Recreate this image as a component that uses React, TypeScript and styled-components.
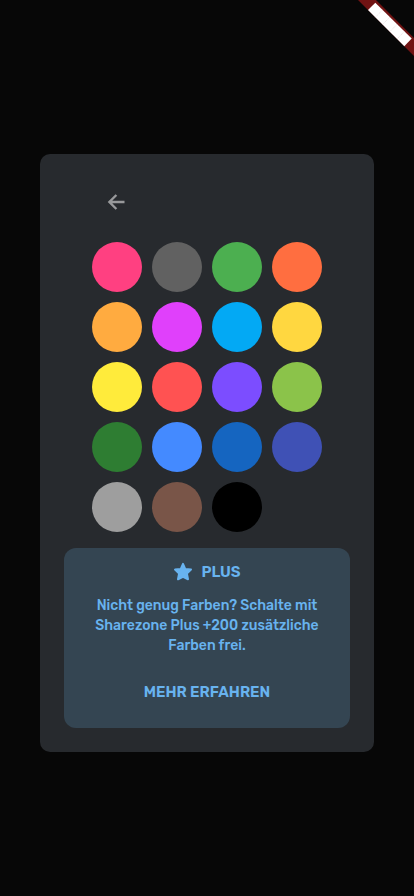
import React from "react";
import styled, { createGlobalStyle } from "styled-components";

const GlobalStyle = createGlobalStyle`
  *, *::before, *::after { box-sizing: border-box; }
  body {
    margin: 0;
    background: #070707;
    font-family: Rubik, Roboto, sans-serif;
  }
`;

const Backdrop = styled.main`
  position: relative;
  display: flex;
  align-items: center;
  justify-content: center;
  min-height: 100vh;
  padding: 34px 40px 24px;
  overflow: hidden;
`;

const Ribbon = styled.svg`
  position: absolute;
  top: 0;
  right: 0;
  width: 56px;
  height: 56px;
`;

const Dialog = styled.section`
  width: 100%;
  max-width: 400px;
  padding: 24px;
  border-radius: 10px;
  background: #272a2e;
`;

const Picker = styled.div`
  width: 230px;
  margin: 0 auto 16px;
`;

const BackButton = styled.button`
  display: grid;
  place-items: center;
  width: 48px;
  height: 48px;
  margin-bottom: 16px;
  padding: 0;
  border: 0;
  border-radius: 50%;
  background: none;
  color: #98999b;
  cursor: pointer;
`;

const Swatches = styled.div`
  display: grid;
  grid-template-columns: repeat(4, 50px);
  gap: 10px;
`;

const Swatch = styled.button<{ $color: string }>`
  width: 50px;
  height: 50px;
  padding: 0;
  border: 0;
  border-radius: 50%;
  background: ${({ $color }) => $color};
  cursor: pointer;
`;

const PlusCard = styled.aside`
  display: flex;
  flex-direction: column;
  align-items: center;
  padding: 12px;
  border-radius: 12px;
  background: #344552;
  color: #68b3ef;
  text-align: center;
`;

const PlusTitle = styled.h2`
  display: flex;
  align-items: center;
  gap: 8px;
  margin: 0 0 12px;
  font-size: 15px;
  line-height: 24px;
  font-weight: 600;
`;

const PlusText = styled.p`
  max-width: 240px;
  margin: 0;
  font-size: 14px;
  line-height: 20px;
  font-weight: 500;
`;

const MoreButton = styled.button`
  height: 48px;
  margin-top: 12px;
  padding: 0 12px;
  border: 0;
  border-radius: 8px;
  background: none;
  color: inherit;
  font-family: inherit;
  font-size: 15px;
  font-weight: 600;
  cursor: pointer;
`;

const colors = [
  ["Pink", "#ff4081"],
  ["Dunkelgrau", "#616161"],
  ["Grün", "#4caf50"],
  ["Orange", "#ff6e40"],
  ["Hellorange", "#ffab40"],
  ["Magenta", "#e040fb"],
  ["Hellblau", "#03a9f4"],
  ["Bernstein", "#ffd740"],
  ["Gelb", "#ffeb3b"],
  ["Rot", "#ff5252"],
  ["Violett", "#7c4dff"],
  ["Hellgrün", "#8bc34a"],
  ["Dunkelgrün", "#2e7d32"],
  ["Blau", "#448aff"],
  ["Dunkelblau", "#1565c0"],
  ["Indigo", "#3f51b5"],
  ["Grau", "#9e9e9e"],
  ["Braun", "#795548"],
  ["Schwarz", "#000000"],
];

export default function App() {
  return (
    <>
      <GlobalStyle />
      <Backdrop>
        <Ribbon viewBox="0 0 56 56" aria-hidden="true">
          <path d="M0 0H18L56 38V56Z" fill="#701313" />
          <path d="M17.3 2.8L53.7 38.6L46.3 46.2L10 10Z" fill="#fff" />
          <path
            d="M24.6 10L17.3 17.2M31.9 17.1L24.5 24.5M39.1 24.3L31.8 31.7M46.4 31.4L39 39"
            stroke="#dcc8c8"
            strokeWidth="0.6"
            strokeDasharray="1 1"
          />
        </Ribbon>
        <Dialog aria-label="Farbe auswählen">
          <Picker>
            <BackButton type="button" aria-label="Zurück">
              <svg width="24" height="24" viewBox="0 0 24 24" fill="none" aria-hidden="true">
                <path
                  d="M20.5 12H5.5M12.4 5L5.4 12L12.4 19"
                  stroke="currentColor"
                  strokeWidth="2.4"
                />
              </svg>
            </BackButton>
            <Swatches>
              {colors.map(([name, color]) => (
                <Swatch key={name} type="button" aria-label={name} $color={color} />
              ))}
            </Swatches>
          </Picker>
          <PlusCard>
            <PlusTitle>
              <svg width="20" height="20" viewBox="0 0 20 20" aria-hidden="true">
                <path
                  d="M10 1.9L12.2 6.9L18 7.6L13.9 11.5L15 17.3L10 14.9L5 17.3L6.1 11.5L2 7.6L7.8 6.9Z"
                  fill="currentColor"
                  stroke="currentColor"
                  strokeWidth="2"
                  strokeLinejoin="round"
                />
              </svg>
              PLUS
            </PlusTitle>
            <PlusText>
              Nicht genug Farben? Schalte mit Sharezone Plus +200 zusätzliche Farben frei.
            </PlusText>
            <MoreButton type="button">MEHR ERFAHREN</MoreButton>
          </PlusCard>
        </Dialog>
      </Backdrop>
    </>
  );
}
